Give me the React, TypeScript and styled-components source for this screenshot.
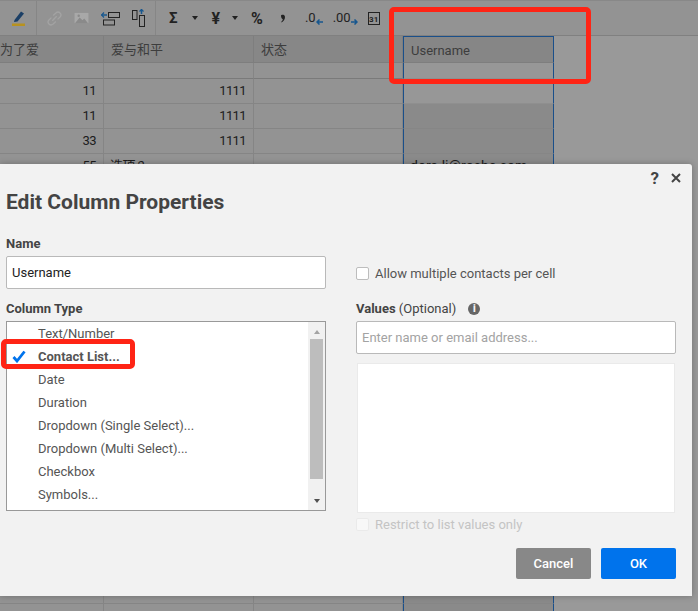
import styled, { createGlobalStyle } from "styled-components";

const GlobalStyle = createGlobalStyle`
  html, body {
    margin: 0;
    padding: 0;
    background: #999;
  }
  * {
    box-sizing: border-box;
  }
`;

const rows = [
  { a: "", b: "", c: "", small: true },
  { a: "11", b: "1111", c: "" },
  { a: "11", b: "1111", c: "" },
  { a: "33", b: "1111", c: "" },
  { a: "55", b: "选项 2", c: "dora.li@roche.com", left: true },
  ...Array.from({ length: 18 }, () => ({ a: "", b: "", c: "" })),
] as { a: string; b: string; c: string; small?: boolean; left?: boolean }[];

const columnTypes = [
  "Text/Number",
  "Contact List...",
  "Date",
  "Duration",
  "Dropdown (Single Select)...",
  "Dropdown (Multi Select)...",
  "Checkbox",
  "Symbols...",
];

const App = () => {
  return (
    <Page>
      <GlobalStyle />
      <Toolbar>
        <ToolGroup $width={36}>
          <svg width="15" height="16" viewBox="0 0 15 16">
            <path d="M3.500 10 L10 1.500 L13 3.500 L6.500 11.500 L3 12 Z" fill="#1b3f66" />
            <rect x="1" y="13.500" width="13" height="2.500" fill="#b8921f" />
          </svg>
        </ToolGroup>
        <Separator />
        <ToolGroup $width={118} $gap={12}>
          <svg width="15" height="15" viewBox="0 0 17 17" fill="none" stroke="#a3a3a3" strokeWidth="1.500">
            <path d="M7 5 L10 2.200 C11.500 1 13.500 1 14.800 2.300 C16 3.600 16 5.500 14.800 6.800 L12 9.500" />
            <path d="M10 12 L7 14.800 C5.500 16 3.500 16 2.200 14.700 C1 13.400 1 11.500 2.200 10.200 L5 7.500" />
            <path d="M6 11 L11 6" />
          </svg>
          <svg width="15" height="13" viewBox="0 0 16 14">
            <rect x="0.500" y="1" width="15" height="11" fill="#a8a8a8" />
            <path d="M1 12 L6 6 L9 9 L11 7 L15 12 Z" fill="#8a8a8a" />
            <circle cx="5" cy="4" r="1.300" fill="#8a8a8a" />
          </svg>
          <svg width="19" height="15" viewBox="0 0 19 15" fill="none" stroke="#222" strokeWidth="1">
            <rect x="7.500" y="1.500" width="11" height="5" />
            <rect x="2.500" y="9" width="11" height="5" />
            <path d="M0.500 4 L6 4" stroke="#17578f" strokeWidth="1.500" />
            <path d="M3 1.500 L0.500 4 L3 6.500" stroke="#17578f" strokeWidth="1.200" />
          </svg>
          <svg width="13" height="18" viewBox="0 0 13 18" fill="none" stroke="#222" strokeWidth="1">
            <rect x="0.500" y="1.500" width="4.500" height="9" />
            <rect x="7.500" y="6.500" width="5" height="11" />
            <path d="M9.500 5 L9.500 0.500" stroke="#17578f" strokeWidth="1.500" />
            <path d="M7.500 2.500 L9.500 0.500 L11.500 2.500" stroke="#17578f" strokeWidth="1.200" />
          </svg>
        </ToolGroup>
        <Separator />
        <FormatTools>
          <Glyph $left={13}>Σ</Glyph>
          <Caret $left={14} />
          <Glyph $left={14} $size={16}>¥</Glyph>
          <Caret $left={12} />
          <Glyph $left={13} $size={16}>%</Glyph>
          <CommaIcon width="6" height="9" viewBox="0 0 6 9">
            <path d="M1 1.500 C1 0.500 5 0 5 3 C5 5.500 3.500 7.500 1.500 8.500 L1.200 7.800 C2.200 7 2.800 6 2.800 5 C1.500 5 1 3 1 1.500 Z" fill="#222" />
          </CommaIcon>
          <DecimalButton $left={19}>
            .0
            <svg width="7" height="6" viewBox="0 0 7 6">
              <path d="M7 3 L2 3 M3.500 0.500 L1 3 L3.500 5.500" stroke="#17578f" strokeWidth="1.500" fill="none" />
            </svg>
          </DecimalButton>
          <DecimalButton $left={10}>
            .00
            <svg width="7" height="6" viewBox="0 0 7 6">
              <path d="M0 3 L5 3 M3.500 0.500 L6 3 L3.500 5.500" stroke="#17578f" strokeWidth="1.500" fill="none" />
            </svg>
          </DecimalButton>
          <CalendarIcon>31</CalendarIcon>
        </FormatTools>
      </Toolbar>
      <Sheet>
        <HeaderCell $flush>为了爱</HeaderCell>
        <HeaderCell>爱与和平</HeaderCell>
        <HeaderCell>状态</HeaderCell>
        <UsernameHeader>Username</UsernameHeader>
        <Blank />
        {rows.map((row, i) => (
          <SheetRow key={i}>
            <Cell $small={row.small}>{row.a}</Cell>
            <Cell $small={row.small} $left={row.left}>{row.b}</Cell>
            <Cell $small={row.small} />
            <UsernameCell $small={row.small} $light={i < 2}>{row.c}</UsernameCell>
            <Blank />
          </SheetRow>
        ))}
      </Sheet>

      <Dialog>
        <DialogTop>
          <HelpMark>?</HelpMark>
          <svg width="10" height="10" viewBox="0 0 10 10">
            <path d="M1 1 L9 9 M9 1 L1 9" stroke="#444" strokeWidth="2" />
          </svg>
        </DialogTop>
        <Title>Edit Column Properties</Title>
        <Columns>
          <Column>
            <Label>Name</Label>
            <TextField readOnly value="Username" />
            <Label $top={12}>Column Type</Label>
            <TypeList>
              <TypeItems>
                {columnTypes.map((t, i) => (
                  <TypeItem key={t} $selected={i === 1}>
                    {i === 1 && (
                      <CheckMark width="14" height="13" viewBox="0 0 14 13">
                        <path d="M1.500 7 L5 11 L12.500 1.500" fill="none" stroke="#0073ec" strokeWidth="2.800" />
                      </CheckMark>
                    )}
                    {t}
                  </TypeItem>
                ))}
              </TypeItems>
              <Scrollbar>
                <ArrowUp />
                <Thumb />
                <ArrowDown />
              </Scrollbar>
            </TypeList>
          </Column>
          <Column>
            <CheckRow>
              <Box />
              Allow multiple contacts per cell
            </CheckRow>
            <Label $top={20}>
              Values<Optional> (Optional)</Optional>
              <InfoIcon>i</InfoIcon>
            </Label>
            <TextField readOnly placeholder="Enter name or email address..." />
            <ValuesBox />
            <CheckRow $disabled $top={4}>
              <Box $disabled />
              Restrict to list values only
            </CheckRow>
            <Buttons>
              <Button $tone="#888888">Cancel</Button>
              <Button $tone="#0073ec">OK</Button>
            </Buttons>
          </Column>
        </Columns>
      </Dialog>

      <Callout $left={389} $top={7} $width={202} $height={77} />
      <Callout $left={1} $top={339} $width={134} $height={30} />
    </Page>
  );
};

export default App;

const Page = styled.div`
  position: relative;
  width: 698px;
  height: 611px;
  overflow: hidden;
  background: #999;
  font-family: Roboto, "Noto Sans CJK SC", sans-serif;
  font-size: 13px;
  color: #444;
`;

const Toolbar = styled.div`
  display: flex;
  height: 36px;
  align-items: center;
  background: #939393;
  border-top: 1px solid #888;
  border-bottom: 1px solid #808080;
`;

const ToolGroup = styled.div<{ $width: number; $gap?: number }>`
  display: flex;
  align-items: center;
  justify-content: center;
  gap: ${(p) => p.$gap ?? 0}px;
  width: ${(p) => p.$width}px;
  height: 100%;
`;

const Separator = styled.div`
  width: 1px;
  height: 100%;
  background: #868686;
`;

const FormatTools = styled.div`
  display: flex;
  align-items: center;
  height: 100%;
`;

const Glyph = styled.span<{ $left: number; $size?: number }>`
  margin-left: ${(p) => p.$left}px;
  font-size: ${(p) => p.$size ?? 15}px;
  font-weight: 700;
  color: #222;
`;

const Caret = styled.span<{ $left: number }>`
  margin-left: ${(p) => p.$left}px;
  width: 0;
  height: 0;
  border-left: 3px solid transparent;
  border-right: 3px solid transparent;
  border-top: 4px solid #222;
`;

const CommaIcon = styled.svg`
  margin-left: 17px;
`;

const DecimalButton = styled.span<{ $left: number }>`
  display: flex;
  align-items: flex-end;
  margin-left: ${(p) => p.$left}px;
  font-size: 13px;
  font-weight: 400;
  line-height: 14px;
  color: #222;
`;

const CalendarIcon = styled.span`
  width: 12px;
  height: 13px;
  margin-left: 10px;
  border: 1px solid #222;
  font-size: 8px;
  font-weight: 700;
  line-height: 14px;
  text-align: center;
  color: #222;
`;

const Sheet = styled.div`
  display: grid;
  grid-template-columns: 104px 150px 149px 151px 1fr;
`;

const SheetRow = styled.div`
  display: contents;
`;

const HeaderCell = styled.div<{ $flush?: boolean }>`
  height: 27px;
  padding-left: ${(p) => (p.$flush ? 0 : 7)}px;
  background: #878787;
  border-right: 1px solid #7e7e7e;
  border-bottom: 1px solid #7e7e7e;
  line-height: 28px;
  color: #3d3d3d;
`;

const UsernameHeader = styled.div`
  height: 27px;
  padding-left: 7px;
  background: #868686;
  border-top: 1px solid #1a4f8a;
  border-left: 1px solid #1a4f8a;
  border-right: 1px solid #1a4f8a;
  border-bottom: 1px solid #7e7e7e;
  line-height: 27px;
  color: #3d3d3d;
`;

const Blank = styled.div`
  background: #999;
`;

const Cell = styled.div<{ $small?: boolean; $left?: boolean }>`
  height: ${(p) => (p.$small ? 16 : 25)}px;
  padding: 0 ${(p) => (p.$left ? 0 : 7)}px 0 ${(p) => (p.$left ? 6 : 7)}px;
  background: #939393;
  border-right: 1px solid #858585;
  border-bottom: 1px solid ${(p) => (p.$small ? "#7a7a7a" : "#858585")};
  text-align: ${(p) => (p.$left ? "left" : "right")};
  font-size: 13px;
  letter-spacing: -0.6px;
  line-height: 24px;
  color: #1c1c1c;
`;

const UsernameCell = styled.div<{ $small?: boolean; $light?: boolean }>`
  height: ${(p) => (p.$small ? 16 : 25)}px;
  padding: 0 6px;
  background: ${(p) => (p.$light ? "#979797" : "#8a8a8a")};
  border-left: 1px solid #1a4f8a;
  border-right: 1px solid #1a4f8a;
  border-bottom: 1px solid ${(p) => (p.$light ? "#8f8f8f" : "#868686")};
  font-size: 14px;
  line-height: 24px;
  color: #1c1c1c;
`;

const Dialog = styled.div`
  position: absolute;
  left: 0;
  top: 164px;
  width: 692px;
  height: 432px;
  padding: 0 16px 0 6px;
  background: #f2f2f2;
  border-top-right-radius: 3px;
  box-shadow: 0 0 6px rgba(0, 0, 0, 0.25);
`;

const DialogTop = styled.div`
  display: flex;
  align-items: center;
  justify-content: flex-end;
  gap: 12px;
  height: 28px;
  margin-right: -5px;
`;

const HelpMark = styled.span`
  font-size: 17px;
  font-weight: 700;
  color: #444;
`;

const Title = styled.div`
  font-size: 21px;
  font-weight: 700;
  line-height: 20px;
  color: #444;
`;

const Columns = styled.div`
  display: grid;
  grid-template-columns: 320px 320px;
  column-gap: 30px;
  margin-top: 24px;
`;

const Column = styled.div`
  display: flex;
  flex-direction: column;
`;

const Label = styled.div<{ $top?: number }>`
  display: flex;
  align-items: center;
  height: 15px;
  margin-top: ${(p) => p.$top ?? 0}px;
  margin-bottom: 5px;
  font-size: 13px;
  font-weight: 700;
  color: #444;
  white-space: pre;
`;

const Optional = styled.span`
  font-weight: 400;
`;

const InfoIcon = styled.span`
  width: 12px;
  height: 12px;
  margin-left: 12px;
  border-radius: 50%;
  background: #666;
  color: #f2f2f2;
  font-size: 10px;
  font-weight: 900;
  line-height: 12px;
  text-align: center;
`;

const TextField = styled.input`
  width: 320px;
  height: 33px;
  padding: 0 5px;
  border: 1px solid #b9b9b9;
  border-radius: 2px;
  outline: none;
  background: #fff;
  font-family: inherit;
  font-size: 13px;
  color: #222;
  &::placeholder {
    color: #a3a3a3;
    opacity: 1;
  }
`;

const TypeList = styled.div`
  display: flex;
  width: 320px;
  height: 190px;
  overflow: hidden;
  border: 1px solid #999;
  background: #fff;
`;

const TypeItems = styled.div`
  flex: 1;
  overflow: hidden;
`;

const TypeItem = styled.div<{ $selected?: boolean }>`
  position: relative;
  height: 23px;
  padding-left: 31px;
  font-weight: ${(p) => (p.$selected ? 700 : 400)};
  line-height: 23px;
  color: #555;
`;

const CheckMark = styled.svg`
  position: absolute;
  left: 5px;
  top: 5px;
`;

const Scrollbar = styled.div`
  display: flex;
  flex-direction: column;
  align-items: center;
  width: 17px;
  padding: 0 2px;
  background: #f1f1f1;
`;

const ArrowUp = styled.span`
  flex: none;
  margin: 8px 0 5px;
  border-left: 3.500px solid transparent;
  border-right: 3.500px solid transparent;
  border-bottom: 4px solid #a3a3a3;
`;

const Thumb = styled.div`
  flex: none;
  width: 13px;
  height: 140px;
  background: #bdbdbd;
`;

const ArrowDown = styled.span`
  flex: none;
  margin-top: 20px;
  border-left: 3.500px solid transparent;
  border-right: 3.500px solid transparent;
  border-top: 4px solid #505050;
`;

const CheckRow = styled.div<{ $disabled?: boolean; $top?: number }>`
  display: flex;
  align-items: center;
  gap: 6px;
  height: 15px;
  margin-top: ${(p) => p.$top ?? 0}px;
  color: ${(p) => (p.$disabled ? "#c4c4c4" : "#555")};
  &:first-child {
    margin-top: 30px;
  }
`;

const Box = styled.span<{ $disabled?: boolean }>`
  width: 13px;
  height: 13px;
  background: #fff;
  border: 1px solid ${(p) => (p.$disabled ? "#e4e4e4" : "#bdbdbd")};
  border-radius: 2px;
  opacity: ${(p) => (p.$disabled ? 0.5 : 1)};
`;

const ValuesBox = styled.div`
  width: 318px;
  height: 150px;
  margin: 9px 0 0 1px;
  background: #fff;
  border: 1px solid #eaeaea;
`;

const Buttons = styled.div`
  display: flex;
  justify-content: flex-end;
  gap: 10px;
  margin-top: 16px;
`;

const Button = styled.button<{ $tone: string }>`
  width: 75px;
  height: 31px;
  padding: 0;
  border: none;
  border-radius: 2px;
  background: ${(p) => p.$tone};
  font-family: inherit;
  font-size: 13px;
  font-weight: 500;
  color: #fff;
`;

const Callout = styled.div<{ $left: number; $top: number; $width: number; $height: number }>`
  position: absolute;
  left: ${(p) => p.$left}px;
  top: ${(p) => p.$top}px;
  width: ${(p) => p.$width}px;
  height: ${(p) => p.$height}px;
  border: 5px solid #ff2415;
  border-radius: 5px;
`;
